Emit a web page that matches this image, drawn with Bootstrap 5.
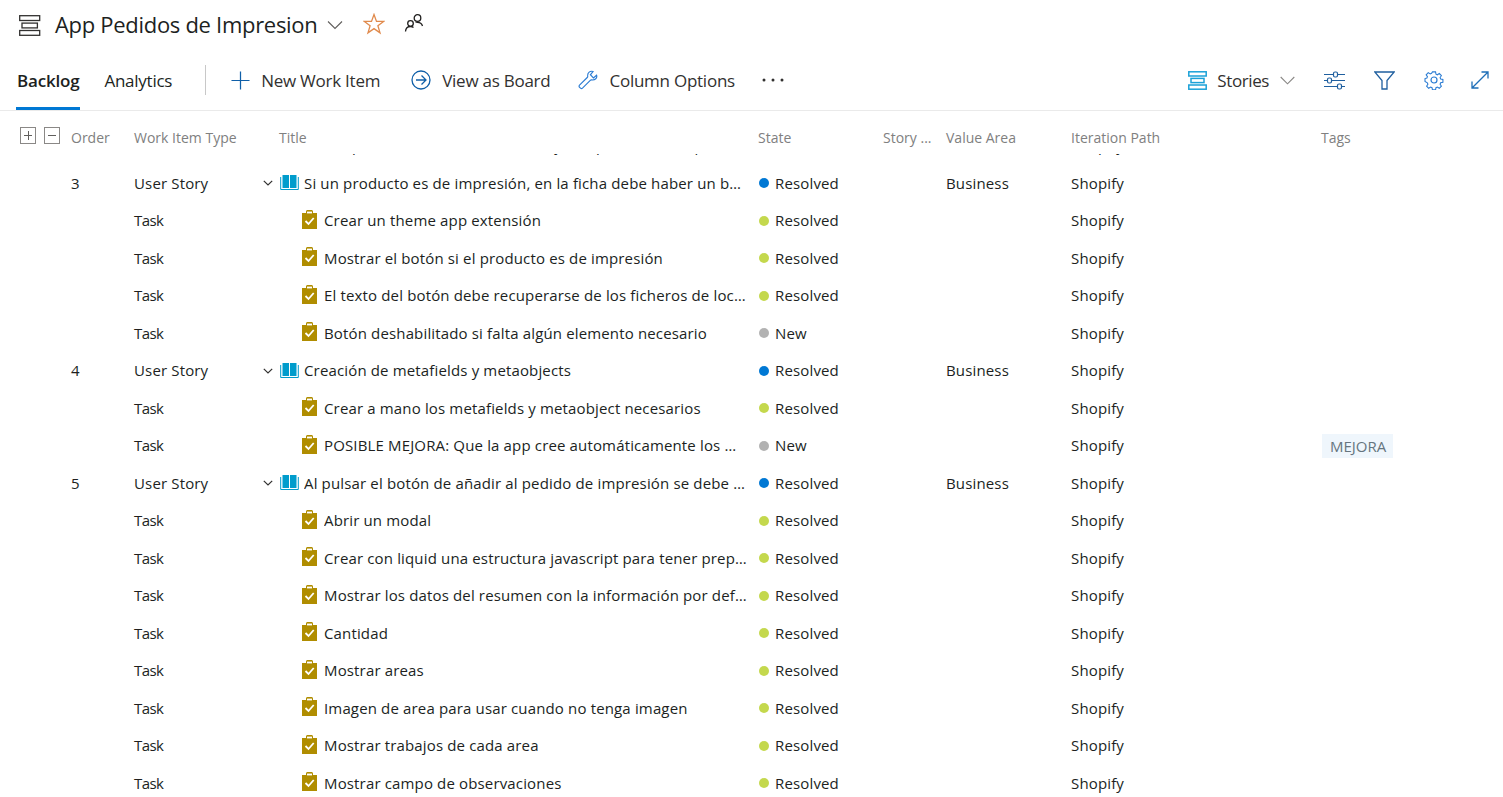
<!DOCTYPE html>
<html lang="es">
<head>
  <meta charset="UTF-8" />
  <title>App Pedidos de Impresion - Backlog</title>
  <meta name="viewport" content="width=device-width, initial-scale=1" />
  <link href="https://cdn.jsdelivr.net/npm/bootstrap@5.3.3/dist/css/bootstrap.min.css" rel="stylesheet" />
  <style>
    html, body { height: 100%; }
    body {
      font-family: "Open Sans", "Noto Sans", sans-serif;
      font-size: 15px;
      color: #201f1e;
      background: #fff;
      overflow: hidden;
    }
    svg { display: block; flex: none; }

    /* Title line */
    .page-head { height: 50px; padding-left: 19px; }
    .head-title { font-size: 22px; letter-spacing: -.3px; margin: 0 0 2px 14px; font-weight: 400; line-height: 1; color: #201f1e; }
    .head-chevron { margin-left: 10px; }
    .head-star { margin-left: 20px; margin-bottom: 3px; }
    .head-people { margin-left: 19px; margin-bottom: 4px; }

    /* Tabs + commands */
    .cmd-bar { height: 61px; padding: 0 14px 0 17px; border-bottom: 1px solid #eaeaea; }
    .tab-item { font-size: 17px; letter-spacing: -.25px; color: #201f1e; text-decoration: none; height: 60px; line-height: 62px; position: relative; }
    .tab-item + .tab-item { margin-left: 25px; }
    .tab-item.is-on { font-weight: 600; letter-spacing: -.2px; }
    .tab-item.is-on::after { content: ""; position: absolute; left: -1px; right: -1px; bottom: 0; height: 3px; background: #0078d4; }
    .cmd-sep { width: 1px; height: 30px; background: #c8c8c8; margin: 0 25px 0 33px; }
    .cmd-link { font-size: 17px; letter-spacing: -.25px; color: #323130; }
    .cmd-link > span { margin-left: 11px; padding-top: 2px; }
    .cmd-board { margin-left: 31px; }
    .cmd-columns { margin-left: 28px; }
    .cmd-more { margin-left: 27px; }
    .cmd-link > .stories-label { margin-left: 10px; letter-spacing: -.4px; }
    .view-chevron { margin-left: 11px; }
    .view-tool { margin-left: 29px; }
    .view-tool-end { margin-left: 27px; }

    /* Grid */
    .grid-row { display: grid; grid-template-columns: 134px 145px 479px 125px 63px 125px 250px 1fr; align-items: center; white-space: nowrap; }
    .grid-head { height: 43px; padding-top: 12px; color: #808080; font-size: 14px; align-items: start; line-height: 29px; }
    .head-first { display: flex; align-items: center; padding-left: 20px; }
    .expand-box { width: 16px; height: 17px; border: 1px solid #8a8886; margin: -5px 8px 0 0; position: relative; flex: none; }
    .expand-box::before { content: ""; position: absolute; left: 3px; right: 3px; top: 7px; height: 1px; background: #605e5c; }
    .expand-box.plus::after { content: ""; position: absolute; top: 3px; bottom: 3px; left: 6.5px; width: 1px; background: #605e5c; }
    .head-order { margin-left: 3px; }
    .grid-body { height: 643px; overflow: hidden; }
    .grid-scroll { margin-top: -27.25px; }
    .wi-row { height: 37.5px; letter-spacing: .15px; line-height: 1; }
    .col-order { padding-left: 71px; }
    .type-task { letter-spacing: -.6px; }
    .title-cell { display: flex; align-items: center; min-width: 0; padding-right: 10px; }
    .title-text { overflow: hidden; text-overflow: ellipsis; min-width: 0; line-height: 21px; }
    .twisty { margin: 0 7px 0 -16px; }
    .story-ico { margin-right: 5px; }
    .task-ico { margin: -3px 7px 0 23px; }
    .state-cell { display: flex; align-items: center; }
    .state-dot { width: 10px; height: 10px; border-radius: 50%; margin: 0 6px 0 1px; flex: none; }
    .dot-blue { background: #0078d4; }
    .dot-lime { background: #c4d84d; }
    .dot-grey { background: #b2b2b2; }
    .tag-chip { display: inline-block; background: #eff6fc; color: #66757f; padding: 0 7px 0 8px; height: 24px; line-height: 24px; margin-left: 1px; letter-spacing: 0; }
  </style>
</head>
<body>

  <!-- Title -->
  <div class="page-head d-flex align-items-center">
    <svg width="22" height="21" viewBox="0 0 22 21" fill="none" stroke="#323130" stroke-width="1.3"><rect x=".7" y=".7" width="20" height="4.8"/><rect x="3" y="8.100" width="15.400" height="4.800"/><rect x=".7" y="15.500" width="20" height="4.800"/></svg>
    <h1 class="head-title">App Pedidos de Impresion</h1>
    <svg class="head-chevron" width="16" height="10" viewBox="0 0 16 10" fill="none" stroke="#605e5c" stroke-width="1.1"><path d="M1 1.5 8 8.500 15 1.500"/></svg>
    <svg class="head-star" width="22" height="22" viewBox="0 0 22 22" fill="none" stroke="#e08a4c" stroke-width="1.3"><path d="M11 1.500 13.500 8.400H20.600L14.900 12.700 17 19.800 11 15.600 5 19.800 7.100 12.700 1.400 8.400H8.500Z"/></svg>
    <svg class="head-people" width="20" height="20" viewBox="0 0 20 20" fill="none" stroke="#201f1e" stroke-width="1.3"><circle cx="13.500" cy="5" r="3.300"/><circle cx="6.500" cy="10.500" r="2.800"/><path d="M1.500 18.500c.2-3 2.200-5 5-5 1.300 0 2.300 .4 3 1M11.500 9c.7 .2 1.300 .3 2 .3 2.500 0 4.300 1.300 5 3.700"/></svg>
  </div>

  <!-- Tabs and commands -->
  <div class="cmd-bar d-flex align-items-center">
    <a class="tab-item is-on" href="#">Backlog</a>
    <a class="tab-item" href="#">Analytics</a>
    <div class="cmd-sep"></div>
    <div class="d-flex align-items-center cmd-link">
      <svg width="19" height="19" viewBox="0 0 20 20" fill="none" stroke="#0f5fa8" stroke-width="1.3"><path d="M10 .5V19.500M.5 10H19.500"/></svg>
      <span>New Work Item</span>
    </div>
    <div class="d-flex align-items-center cmd-link cmd-board">
      <svg width="20" height="20" viewBox="0 0 20 20" fill="none" stroke="#0f5fa8" stroke-width="1.300"><circle cx="10" cy="10" r="9"/><path d="M5 10H15M10.500 5.500 15 10l-4.500 4.500"/></svg>
      <span>View as Board</span>
    </div>
    <div class="d-flex align-items-center cmd-link cmd-columns">
      <svg width="20" height="20" viewBox="0 0 21 21" fill="none" stroke="#2b7cd3" stroke-width="1.200"><path d="M19.500 5.500 16.200 8.300 13 5 15.800 1.600C12.800.5 9.800 2.800 10.200 6.200 10.300 6.900 10.200 7.400 9.700 7.900L1.600 15.900C.1 17.400 3.100 20.500 4.700 19L12.900 10.800C13.400 10.300 13.900 10.300 14.700 10.400 17.800 10.800 20.500 8.500 19.500 5.500Z"/></svg>
      <span>Column Options</span>
    </div>
    <svg class="cmd-more" width="22" height="4" viewBox="0 0 22 4" fill="#323130"><circle cx="2" cy="2" r="1.500"/><circle cx="11" cy="2" r="1.500"/><circle cx="20" cy="2" r="1.500"/></svg>

    <div class="ms-auto d-flex align-items-center cmd-link">
      <svg width="19" height="19" viewBox="0 0 19 19" fill="none" stroke="#1ba1d8" stroke-width="1.500"><rect x=".8" y=".8" width="17.400" height="4.200"/><rect x="3" y="7.400" width="13" height="4.200"/><rect x=".8" y="14" width="17.400" height="4.200"/></svg>
      <span class="stories-label">Stories</span>
      <svg class="view-chevron" width="15" height="9" viewBox="0 0 15 9" fill="none" stroke="#8a8886" stroke-width="1.100"><path d="M.7 1 7.500 7.800 14.300 1"/></svg>
      <svg class="view-tool" width="21" height="19" viewBox="0 0 21 19" fill="none" stroke="#1f5f9f" stroke-width="1.200"><path d="M0 3.500H9M14 3.500H21M0 9.500H3M8 9.500H21M0 15.500H13M18 15.500H21"/><rect x="9.500" y="1" width="4" height="5" rx="1.500"/><rect x="3.500" y="7" width="4" height="5" rx="1.500"/><rect x="13.500" y="13" width="4" height="5" rx="1.500"/></svg>
      <svg class="view-tool" width="21" height="19" viewBox="0 0 21 19" fill="none" stroke="#1f5f9f" stroke-width="1.300"><path d="M.8 1H20.200L13 9.500V18H8V9.500Z"/></svg>
      <svg class="view-tool" width="20" height="20" viewBox="0 0 20 20" fill="none" stroke="#2b7cd3" stroke-width="1.200"><circle cx="10" cy="10" r="3"/><path d="M8.300 1h3.400l.5 2.500 1.500.7 2.200-1.400 2.300 2.400-1.400 2.100.6 1.600 2.500.5v3.200l-2.500.5-.6 1.600 1.400 2.100-2.300 2.400-2.200-1.400-1.500.7-.5 2.500H8.300l-.5-2.500-1.500-.7-2.200 1.400-2.300-2.400 1.400-2.100-.6-1.600L0 11.600V8.400l2.100-.5.6-1.600-1.400-2.100 2.300-2.400 2.200 1.400 1.500-.7Z" transform="translate(1 1) scale(.9)"/></svg>
      <svg class="view-tool-end" width="18" height="18" viewBox="0 0 18 18" fill="none" stroke="#1f6fb8" stroke-width="1.300"><path d="M1 17 17 1M10.500 1H17V7.500M1 10.500V17H7.500"/></svg>
    </div>
  </div>

  <!-- Grid header -->
  <div class="grid-row grid-head">
    <div class="head-first"><span class="expand-box plus"></span><span class="expand-box"></span><span class="head-order">Order</span></div>
    <div>Work Item Type</div>
    <div>Title</div>
    <div>State</div>
    <div>Story ...</div>
    <div>Value Area</div>
    <div>Iteration Path</div>
    <div>Tags</div>
  </div>

  <!-- Grid rows get filled in from data below -->
  <div class="grid-body"><div class="grid-scroll" id="rows"></div></div>

  <script>
    const stories = [
      { task: 'Ver producto en ficha del botón y con precios de su pantalla final del modal' },
      { order: 3, title: 'Si un producto es de impresión, en la ficha debe haber un botón para añadir al pedido' },
      { task: 'Crear un theme app extensión' },
      { task: 'Mostrar el botón si el producto es de impresión' },
      { task: 'El texto del botón debe recuperarse de los ficheros de localización' },
      { task: 'Botón deshabilitado si falta algún elemento necesario', state: 'New' },
      { order: 4, title: 'Creación de metafields y metaobjects' },
      { task: 'Crear a mano los metafields y metaobject necesarios' },
      { task: 'POSIBLE MEJORA: Que la app cree automáticamente los metafields', state: 'New', tag: 'MEJORA' },
      { order: 5, title: 'Al pulsar el botón de añadir al pedido de impresión se debe abrir un modal' },
      { task: 'Abrir un modal' },
      { task: 'Crear con liquid una estructura javascript para tener preparados los datos' },
      { task: 'Mostrar los datos del resumen con la información por defecto del producto' },
      { task: 'Cantidad' },
      { task: 'Mostrar areas' },
      { task: 'Imagen de area para usar cuando no tenga imagen' },
      { task: 'Mostrar trabajos de cada area' },
      { task: 'Mostrar campo de observaciones' }
    ];

    const storyIcon = '<svg class="story-ico" width="19" height="16" viewBox="0 0 19 16"><path fill="#009ccc" d="M2.500 0H9V13H2.500ZM10 0h6.500V13H10Z"/><path fill="none" stroke="#009ccc" d="M.7 2V14.500H18.300V2"/></svg>';
    const taskIcon = '<svg class="task-ico" width="15" height="19" viewBox="0 0 15 19"><path fill="#b08d00" d="M0 3h4V1.500C4 .7 4.700 0 5.500 0h4C10.300 0 11 .7 11 1.500V3h4v16H0Z"/><rect x="5" y="1.600" width="5" height="1.800" fill="#fff"/><path d="M3.500 11 6.500 14 11.700 8" fill="none" stroke="#fff" stroke-width="1.800"/></svg>';
    const twisty = '<svg class="twisty" width="10" height="6" viewBox="0 0 10 6" fill="none" stroke="#323130" stroke-width="1.200"><path d="M.8.8 5 5 9.200.8"/></svg>';

    document.getElementById('rows').innerHTML = stories.map(r => {
      const isStory = !!r.order;
      const state = r.state || 'Resolved';
      const dot = state === 'New' ? 'dot-grey' : (isStory ? 'dot-blue' : 'dot-lime');
      const titleCell = isStory
        ? twisty + storyIcon + '<span class="title-text">' + r.title + '</span>'
        : taskIcon + '<span class="title-text">' + r.task + '</span>';
      return `
        <div class="grid-row wi-row">
          <div class="col-order">${r.order || ''}</div>
          <div class="${isStory ? '' : 'type-task'}">${isStory ? 'User Story' : 'Task'}</div>
          <div class="title-cell">${titleCell}</div>
          <div class="state-cell"><span class="state-dot ${dot}"></span>${state}</div>
          <div></div>
          <div>${isStory ? 'Business' : ''}</div>
          <div>Shopify</div>
          <div>${r.tag ? '<span class="tag-chip">' + r.tag + '</span>' : ''}</div>
        </div>`;
    }).join('');
  </script>
  <script src="https://cdn.jsdelivr.net/npm/bootstrap@5.3.3/dist/js/bootstrap.bundle.min.js"></script>
</body>
</html>
